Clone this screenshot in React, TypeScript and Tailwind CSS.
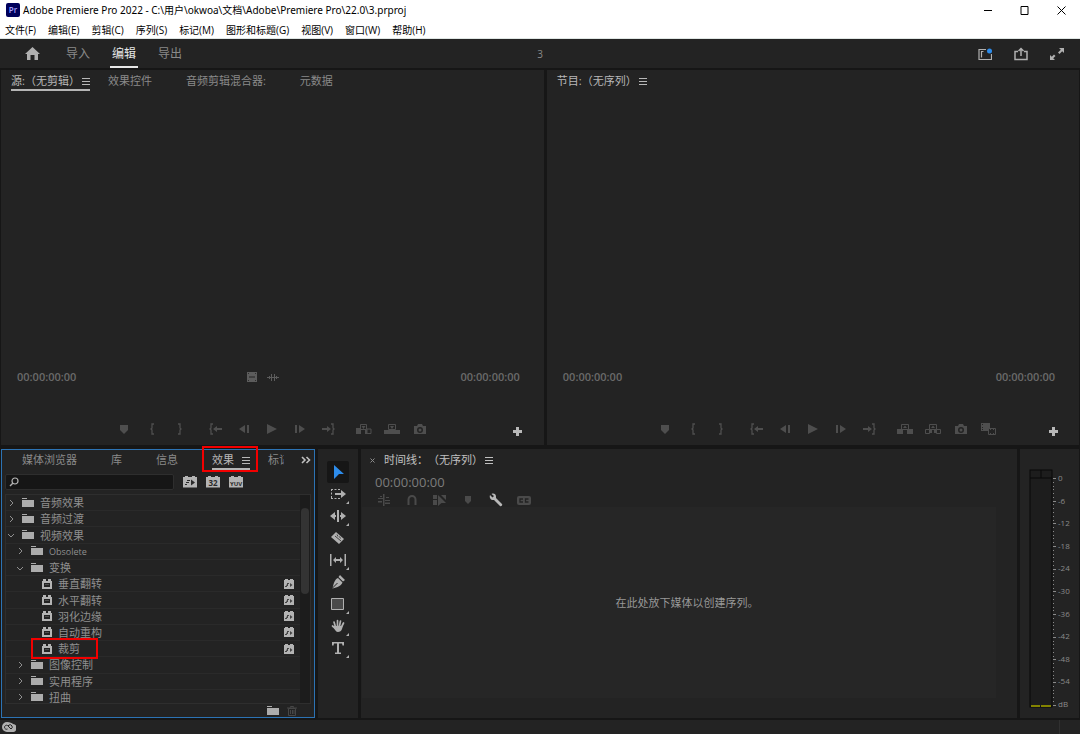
import React from 'react';
import clsx from 'clsx';

const MENUS = ['文件(F)', '编辑(E)', '剪辑(C)', '序列(S)', '标记(M)', '图形和标题(G)', '视图(V)', '窗口(W)', '帮助(H)'];

const TREE = [
  { name: '音频效果', level: 0 },
  { name: '音频过渡', level: 0 },
  { name: '视频效果', level: 0, open: true },
  { name: 'Obsolete', level: 1 },
  { name: '变换', level: 1, open: true },
  { name: '垂直翻转', level: 2 },
  { name: '水平翻转', level: 2 },
  { name: '羽化边缘', level: 2 },
  { name: '自动重构', level: 2 },
  { name: '裁剪', level: 2, marked: true },
  { name: '图像控制', level: 1 },
  { name: '实用程序', level: 1 },
  { name: '扭曲', level: 1 },
];

const METER_LABELS = ['0', '-6', '-12', '-18', '-24', '-30', '-36', '-42', '-48', '-54', 'dB'];

type IconProps = { w?: number; h?: number; className?: string; children: React.ReactNode };

const Icon = ({ w = 16, h = 16, className, children }: IconProps) => (
  <svg width={w} height={h} viewBox={`0 0 ${w} ${h}`} fill="currentColor" className={clsx('shrink-0', className)} aria-hidden="true">
    {children}
  </svg>
);

const MenuLines = () => (
  <Icon w={8} h={8}>
    <path d="M0 1h8v1H0zM0 4h8v1H0zM0 7h8v1H0z" />
  </Icon>
);

const Folder = () => (
  <Icon w={12} h={10}>
    <path d="M0 0h5v1H0zM0 2h12v7H0z" />
  </Icon>
);

const Brick = () => (
  <Icon w={10} h={10}>
    <path fillRule="evenodd" d="M1 0h3v2h2V0h3v2h1v8H0V2h1zM2 4v4h6V4z" />
    <path d="M3 5h4v1H3z" opacity=".3" />
  </Icon>
);

const BadgeSmall = () => (
  <Icon w={10} h={10} className="text-[#b4b4b4]">
    <path d="M1 0h3v1h2V0h3v1h1v9H0V1h1z" />
    <path d="M3 4h2v1H3zM3 5h1v2H2zM1 7h2v1H1zM6 4l2.500 2L6 8z" fill="#444" />
  </Icon>
);

const Badge = ({ text }: { text?: string }) => (
  <Icon w={14} h={12}>
    <path d="M2 0h3v1h4V0h3v1h2v10.500H0V1h2z" />
    {text ? (
      <text x="7" y="9.500" textAnchor="middle" fontSize={text.length > 2 ? 6 : 8} fontWeight="700" fill="#2a2a2a">
        {text}
      </text>
    ) : (
      <path d="M4 4h3v1H4zM3 6h3v1H3zM2 8h2v1H2zM8 3.500 12 6.500 8 9.500z" fill="#2a2a2a" />
    )}
  </Icon>
);

type TabProps = { label: string; active?: boolean; boxed?: boolean; single?: boolean };

const Tab = ({ label, active, boxed, single }: TabProps) => (
  <button
    className={clsx(
      'relative flex h-5 shrink-0 items-center whitespace-nowrap border-b-2 pt-0.5',
      label.endsWith('）') ? 'gap-0.5' : 'gap-2',
      active ? 'border-[#b5b5b5]' : 'border-transparent',
      active || single ? 'text-[#b8b8b8]' : 'text-[#8a8a8a]'
    )}
  >
    {label}
    <span className={active || single ? '' : 'invisible'}>
      <MenuLines />
    </span>
    {boxed && <span className="absolute -top-1 -right-2 -bottom-1 -left-2.5 border-2 border-[#f20000]" />}
  </button>
);

/* Transport glyphs */
const GLYPHS: Record<string, React.ReactNode> = {
  marker: <path d="M4 4h8v5l-4 4-4-4z" />,
  in: <path d="M10 3H8v4L7 8l1 1v4h2" fill="none" stroke="currentColor" strokeWidth="1.300" />,
  out: <path d="M6 3h2v4l1 1-1 1v4H6" fill="none" stroke="currentColor" strokeWidth="1.300" />,
  goIn: (
    <>
      <path d="M5 3H3v4L2 8l1 1v4h2" fill="none" stroke="currentColor" strokeWidth="1.300" />
      <path d="M5 8l4-3v2h5v2H9v2z" />
    </>
  ),
  stepBack: <path d="M3 8l6-4v8zM11 4h2v8h-2z" />,
  play: <path d="M3 3l10 5-10 5z" />,
  stepForward: <path d="M13 8L7 4v8zM3 4h2v8H3z" />,
  goOut: (
    <>
      <path d="M11 3h2v4l1 1-1 1v4h-2" fill="none" stroke="currentColor" strokeWidth="1.300" />
      <path d="M11 8L7 5v2H2v2h5v2z" />
    </>
  ),
  insert: (
    <>
      <path d="M0 7h5v6H0z" />
      <path d="M4.500 3.500h6v5h-6zM11 8h4v4.500h-4z" fill="none" stroke="currentColor" />
      <path d="M5.500 5h4l-2 3zM9 9h2v4H9z" />
    </>
  ),
  overwrite: (
    <>
      <path d="M0 9h16v4H0z" />
      <path d="M4.500 3.500h7v5h-7z" fill="none" stroke="currentColor" />
      <path d="M6 5h4L8 8z" />
    </>
  ),
  lift: (
    <>
      <path d="M0 8h6v5H0zM10 8h6v5h-6z" />
      <path d="M4.500 3.500h7v5h-7z" fill="none" stroke="currentColor" />
      <path d="M8 4.500L10 7H6z" />
    </>
  ),
  extract: (
    <>
      <path d="M.5 8.500h4v4h-4zM11.500 8.500h4v4h-4zM4.500 3.500h7v5h-7z" fill="none" stroke="currentColor" />
      <path d="M8 4.500L10 7H6zM5 9h2v3H5zM9 9h2v3H9z" />
    </>
  ),
  camera: (
    <path fillRule="evenodd" d="M2 5h3l1-2h4l1 2h3v8H2zM8 6a3 3 0 1 0 0 6 3 3 0 0 0 0-6zM8 7.500a1.500 1.500 0 1 1 0 3 1.500 1.500 0 0 1 0-3z" />
  ),
  compare: (
    <>
      <path d="M0 2h9v8H0z" />
      <path d="M7.500 7.500h7v6h-7z" fill="#232323" stroke="currentColor" />
      <path d="M1 3h1v1H1zM1 6h1v1H1zM1 8h1v1H1z" fill="#232323" />
      <path d="M9 8h1v1H9zM9 12h1v1H9zM12 8h1v1h-1zM12 12h1v1h-1z" />
    </>
  ),
};

const GlyphButton = ({ name, label }: { name: string; label: string }) => (
  <button aria-label={label} className="flex h-8 w-7 items-center justify-center text-[#4e4e4e]">
    <Icon>{GLYPHS[name]}</Icon>
  </button>
);

const Monitor = ({ tabs, source }: { tabs: string[]; source?: boolean }) => (
  <section className="flex min-w-0 flex-col bg-[#232323]">
    <div className="flex gap-[18px] overflow-hidden pt-px pl-[10px]">
      {tabs.map((tab, i) => (
        <Tab key={tab} label={tab} active={source && i === 0} single={!source} />
      ))}
    </div>
    <div className="flex-1" />
    <div className="grid h-5 grid-cols-[1fr_auto_1fr] items-center pr-6 pl-4 text-[11px] font-semibold text-[#6a6a6a]">
      <span>00:00:00:00</span>
      <span className="flex items-center gap-[9px] pr-3 text-[#5c5c5c]">
        {source && (
          <>
            <Icon w={12} h={12}>
              <path fillRule="evenodd" d="M1 1h10v10H1zM3 5.500h6v1H3z" />
              <path d="M2 2h1v1H2zM2 9h1v1H2zM9 2h1v1H9zM9 9h1v1H9z" fill="#2e2e2e" />
            </Icon>
            <Icon w={12} h={12}>
              <path d="M0 6h12v1H0zM2 5h1v3H2zM4 3h1v7H4zM7 3h1v7H7zM9 5h1v3H9z" />
            </Icon>
          </>
        )}
      </span>
      <span className="text-right">00:00:00:00</span>
    </div>
    <div className="mt-[26px] grid h-8 grid-cols-[1fr_auto_1fr] px-4">
      <div className="flex justify-end gap-2">
        <div className="flex">
          <GlyphButton name="marker" label="添加标记" />
          <GlyphButton name="in" label="标记入点" />
          <GlyphButton name="out" label="标记出点" />
        </div>
        <div className="flex">
          <GlyphButton name="goIn" label="转到入点" />
          <GlyphButton name="stepBack" label="后退一帧" />
        </div>
      </div>
      <GlyphButton name="play" label="播放" />
      <div className="flex gap-2">
        <div className="flex">
          <GlyphButton name="stepForward" label="前进一帧" />
          <GlyphButton name="goOut" label="转到出点" />
        </div>
        <div className="flex">
          <GlyphButton name={source ? 'insert' : 'lift'} label={source ? '插入' : '提升'} />
          <GlyphButton name={source ? 'overwrite' : 'extract'} label={source ? '覆盖' : '提取'} />
          <GlyphButton name="camera" label="导出帧" />
          {!source && <GlyphButton name="compare" label="比较视图" />}
        </div>
        <button aria-label="按钮编辑器" className="ml-auto flex h-7 w-5 items-center justify-center self-end text-[#b8b8b8]">
          <Icon w={9} h={9}>
            <path d="M3 0h3v3h3v3H6v3H3V6H0V3h3z" />
          </Icon>
        </button>
      </div>
    </div>
  </section>
);

const EffectsPanel = () => (
  <section className="flex flex-col border border-[#2c73b4] bg-[#232323] px-[3px]">
    <div className="flex h-[22px] items-start pl-[17px]">
      <div className="flex w-[262px] gap-[18px] overflow-x-clip">
        <Tab label="媒体浏览器" />
        <Tab label="库" />
        <Tab label="信息" />
        <Tab label="效果" active boxed />
        <Tab label="标记" />
      </div>
      <button aria-label="更多面板" className="ml-auto flex h-5 items-center text-[#c0c0c0]">
        <Icon w={10} h={8}>
          <path d="M1 1l3 3-3 3M5.500 1l3 3-3 3" fill="none" stroke="currentColor" strokeWidth="1.6" />
        </Icon>
      </button>
    </div>
    <div className="flex h-[22px] items-center gap-[9px] pb-0.5 text-[#b4b4b4]">
      <div className="relative">
        <input type="text" aria-label="搜索效果" className="block h-4 w-[169px] rounded-xs border border-[#2e2e2e] bg-[#161616] pl-5 text-[11px] outline-none" />
        <Icon w={10} h={10} className="absolute top-[3px] left-1">
          <circle cx="6" cy="4" r="3" fill="none" stroke="currentColor" strokeWidth="1.2" />
          <path d="M4 6L1 9" stroke="currentColor" strokeWidth="1.5" />
        </Icon>
      </div>
      <button aria-label="加速效果"><Badge /></button>
      <button aria-label="32 位颜色效果"><Badge text="32" /></button>
      <button aria-label="YUV 效果"><Badge text="YUV" /></button>
    </div>
    <div className="flex h-[210px] overflow-hidden border border-[#2e2e2e]">
      <ul className="flex h-[211px] min-w-0 flex-1 flex-col">
        {TREE.map((node) => (
          <li
            key={node.name}
            className={clsx(
              'relative flex flex-1 items-center gap-[6px] border-b border-[#2a2a2a] pr-[6px] text-[#8f8f8f]',
              node.level === 1 && 'pl-[9px]',
              node.level === 2 && 'pl-9'
            )}
          >
            {node.level < 2 ? (
              <>
                <button aria-label={`展开 ${node.name}`} className="flex w-[10px] justify-center">
                  <Icon w={8} h={8}>
                    <path d={node.open ? 'M1 3l3 3 3-3' : 'M3 1l3 3-3 3'} fill="none" stroke="currentColor" />
                  </Icon>
                </button>
                <span className="text-[#acacac]"><Folder /></span>
              </>
            ) : (
              <span className="text-[#b4b4b4]"><Brick /></span>
            )}
            <span className={clsx('flex-1 leading-none', node.name === 'Obsolete' && 'text-[9px]')}>{node.name}</span>
            {node.level === 2 && <BadgeSmall />}
            {node.marked && <span className="absolute -top-[3px] -bottom-[3px] left-[25px] w-[67px] border-2 border-[#f20000]" />}
          </li>
        ))}
      </ul>
      <div className="w-[10px] bg-[#1c1c1c] px-px pt-[13px]">
        <div className="h-[86px] rounded-full bg-[#333]" />
      </div>
    </div>
    <div className="flex flex-1 items-center justify-end gap-2 pr-[14px]">
      <button aria-label="新建自定义素材箱" className="text-[#acacac]"><Folder /></button>
      <button aria-label="删除自定义项目" className="text-[#474747]">
        <Icon w={10} h={10}>
          <path d="M1.500 2.500h7v7h-7zM0 2h10M3.500 1.500v-1h3v1M3.500 4v4M5.500 4v4M7 4v4" fill="none" stroke="currentColor" />
        </Icon>
      </button>
    </div>
  </section>
);

const TOOLS: { label: string; more?: boolean; art: React.ReactNode }[] = [
  { label: '选择工具', art: <path d="M4 1l10 9H9l-5 5z" fill="#2d8ceb" /> },
  {
    label: '向前选择轨道工具',
    more: true,
    art: (
      <>
        <path d="M1 3.500h9M1 12.500h9M1.500 3v10" fill="none" stroke="currentColor" strokeDasharray="2 1.500" />
        <path d="M5 7h6V4l5 4-5 4V9H5z" />
      </>
    ),
  },
  { label: '波纹编辑工具', more: true, art: <path d="M7 2h2v12H7zM0 8l5-4v3h1v2H5v3zM16 8l-5-4v3h-1v2h1v3z" /> },
  {
    label: '剃刀工具',
    art: (
      <>
        <path d="M6 2l8 7-5 5-8-7z" />
        <path d="M5 6l6 5M7 4.500l1 2M9.500 6.500l1 2" fill="none" stroke="#444" />
      </>
    ),
  },
  { label: '外滑工具', more: true, art: <path d="M0 2h1.500v12H0zM14.500 2H16v12h-1.500zM3 8l3-3v2h4V5l3 3-3 3V9H6v2z" /> },
  {
    label: '钢笔工具',
    art: (
      <>
        <path d="M10 1l5 5-2 1.500L8.500 3zM8 4l4.500 4.500c-1 3-5 5-10 6C3.500 9.500 5 5 8 4z" />
        <path d="M2.500 14l5-5" stroke="#232323" />
      </>
    ),
  },
  { label: '矩形工具', more: true, art: <path d="M1.500 2.500h12v11h-12z" fill="#4a4a4a" stroke="currentColor" /> },
  {
    label: '手形工具',
    more: true,
    art: (
      <>
        <path d="M5.500 9L4 4M7.500 8V2.500M9.500 8l1-5M11.500 9l2-4M6 11L2.500 8" stroke="currentColor" strokeWidth="1.7" strokeLinecap="round" />
        <path d="M4 8h8.500c0 3-1.500 6-4.500 6-2 0-3-2-4-4z" />
      </>
    ),
  },
  { label: '文字工具', more: true, art: <path d="M2 2h12v3.500h-1.500L12 3.500H9V12.500h2V14H5v-1.500h2V3.500H4l-.5 2H2z" /> },
];

const Tools = () => (
  <section className="flex flex-col items-center bg-[#232323] pt-3 text-[#b0b0b0]">
    {TOOLS.map((tool, i) => (
      <button
        key={tool.label}
        aria-label={tool.label}
        className={clsx('relative flex h-[22px] w-[22px] items-center justify-center', i === 0 && 'rounded-xs bg-[#161616]')}
      >
        <Icon w={16} h={16}>{tool.art}</Icon>
        {tool.more && (
          <Icon w={3} h={3} className="absolute right-0 bottom-px">
            <path d="M3 0v3H0z" />
          </Icon>
        )}
      </button>
    ))}
  </section>
);

const TIMELINE_TOOLS: { label: string; on?: boolean; art: React.ReactNode }[] = [
  { label: '嵌套序列', art: <path d="M7 2h1.500v12H7zM2 6h5v1H2zM4 4h2v1H4zM10 5h3v1h-3zM9 8h5v1H9zM2 9h4v1.500H2zM9 10.500h5V12H9z" /> },
  { label: '对齐', art: <path d="M4.500 13V7.500a3.500 3.500 0 0 1 7 0V13" fill="none" stroke="currentColor" strokeWidth="2" /> },
  { label: '链接选择项', art: <path d="M1 3h4v4H1zM1 8h4v5H1zM9 3h5v5zM6 3l8 8h-4.500L6 14z" /> },
  { label: '添加标记', art: <path d="M5 4h6v5l-3 3-3-3z" /> },
  {
    label: '时间轴显示设置',
    on: true,
    art: <path d="M2 3l2.500 2.500L6 4 3.500 2C5.500 1 8 2 8 4.500V6l6 6c1 1-1 3-2 2L6 8C3 8.500 1 6 2 3z" />,
  },
  {
    label: '字幕轨道选项',
    art: (
      <>
        <rect x="1" y="4" width="14" height="9" rx="2" />
        <path d="M7 7H4v3h3M12.500 7h-3v3h3" fill="none" stroke="#232323" strokeWidth="1.300" />
      </>
    ),
  },
];

const Timeline = () => (
  <section className="flex min-w-0 flex-col bg-[#232323] px-px">
    <div className="flex h-[22px] items-center pl-2 text-[#c0c0c0]">
      <button aria-label="关闭时间线" className="pr-[9px] text-[#8a8a8a]">
        <Icon w={5} h={5}>
          <path d="M.5.5l4 4M4.500.5l-4 4" stroke="currentColor" />
        </Icon>
      </button>
      <span className="pr-0.5">时间线：（无序列）</span>
      <MenuLines />
    </div>
    <div className="pl-[13px] text-[13px] leading-[22px] text-[#7c7c7c]">00:00:00:00</div>
    <div className="flex h-[14px] items-center pl-2">
      {TIMELINE_TOOLS.map((tool) => (
        <button key={tool.label} aria-label={tool.label} className={clsx('flex w-7 justify-center', tool.on ? 'text-[#b8b8b8]' : 'text-[#4a4a4a]')}>
          <Icon w={16} h={16}>{tool.art}</Icon>
        </button>
      ))}
    </div>
    <div className="mr-5 mb-5 flex flex-1 items-center justify-center bg-[#262626] pl-4 text-[#989898]">
      在此处放下媒体以创建序列。
    </div>
  </section>
);

const Meters = () => (
  <section className="flex gap-[2px] bg-[#232323] pt-5 pl-[9px]">
    <Icon w={27} h={240}>
      <rect x="1" y="1" width="22" height="237" fill="#1d1d1d" stroke="#080808" />
      <path d="M1 9h22M12 1v8" fill="none" stroke="#080808" />
      <path d="M2 236h9v2H2zM12 236h10v2H12z" fill="#838300" />
      {Array.from({ length: 61 }, (_, i) => (
        <rect key={i} x="24" y={Math.round(9 + i * 3.78)} width={i % 6 === 0 ? 3 : 1} height="1" fill="#8a8a8a" />
      ))}
    </Icon>
    <div className="flex h-[240px] flex-col justify-between pt-1 text-[8px] leading-[10px] text-[#8a8a8a]">
      {METER_LABELS.map((label) => (
        <span key={label}>{label}</span>
      ))}
    </div>
  </section>
);

const TitleBar = () => (
  <div className="flex h-5 items-center bg-white pl-[6px] text-black">
    <svg width="14" height="14" viewBox="0 0 14 14" className="shrink-0" aria-hidden="true">
      <rect width="14" height="14" rx="2" fill="#00005b" />
      <text x="7" y="10" textAnchor="middle" fontSize="8" fontWeight="600" fill="#a9a5ff">Pr</text>
    </svg>
    <h1 className="truncate pl-[3px] font-['Noto_Sans','Noto_Sans_CJK_SC',sans-serif] text-[10px]">
      Adobe Premiere Pro 2022 - C:\用户\okwoa\文档\Adobe\Premiere Pro\22.0\3.prproj
    </h1>
    <div className="ml-auto flex">
      <button aria-label="最小化" className="flex w-[37px] justify-center">
        <Icon w={9} h={9}><path d="M1 4h8v1H1z" /></Icon>
      </button>
      <button aria-label="最大化" className="flex w-[37px] justify-center">
        <Icon w={9} h={9}><path d="M1 .5h7v8H1z" fill="none" stroke="currentColor" /></Icon>
      </button>
      <button aria-label="关闭" className="flex w-[37px] justify-center">
        <Icon w={9} h={9}><path d="M.5.5l8 8M8.500.5l-8 8" stroke="currentColor" /></Icon>
      </button>
    </div>
  </div>
);

const WorkspaceBar = () => (
  <header className="grid h-[29px] grid-cols-[1fr_auto_1fr] items-center bg-[#232323] text-[#8a8a8a]">
    <nav className="flex h-full items-center pl-[25px]">
      <button aria-label="主页" className="pr-6 text-[#b0b0b0]">
        <Icon w={15} h={13}>
          <path d="M7.500 0L15 7h-2v6H9.500V8h-4v5H2V7H0z" />
        </Icon>
      </button>
      <div className="flex h-full gap-[18px] text-xs">
        <button className="border-b-2 border-transparent px-0.5 pt-0.5">导入</button>
        <button className="border-b-2 border-[#e6e6e6] px-0.5 pt-0.5 text-[#e6e6e6]">编辑</button>
        <button className="border-b-2 border-transparent px-0.5 pt-0.5">导出</button>
      </div>
    </nav>
    <span className="text-[10px]">3</span>
    <div className="flex justify-end gap-[22px] pr-4 text-[#b0b0b0]">
      <button aria-label="工作区">
        <Icon w={14} h={14}>
          <path d="M8 2.500H1v10h12.500V7M3.500 4.500v6M5.500 4.500H3" fill="none" stroke="currentColor" strokeWidth="1.200" />
          <circle cx="11.500" cy="4" r="2.500" fill="#2d8ceb" />
        </Icon>
      </button>
      <button aria-label="快速导出">
        <Icon w={14} h={14}>
          <path d="M4 4.500H1v8h12v-8h-3M7 9V2M4.500 4L7 1.500 9.500 4" fill="none" stroke="currentColor" strokeWidth="1.5" />
        </Icon>
      </button>
      <button aria-label="全屏">
        <Icon w={14} h={14}>
          <path d="M9 1h5v5l-1.800-1.800L9.500 7 8 5.500l2.800-2.700zM5 13H0V8l1.800 1.800L4 7.500 5.500 9l-2.300 2.200z" />
        </Icon>
      </button>
    </div>
  </header>
);

export default function App() {
  return (
    <div className="flex min-h-screen flex-col bg-[#161616] font-['Open_Sans','Noto_Sans_CJK_SC',sans-serif] text-[11px] leading-4 [text-spacing-trim:space-all]">
      <TitleBar />
      <div className="flex h-[19px] items-center gap-3 border-b border-[#dfe6e4] bg-white pt-0.5 pl-[5px] text-[10px] text-black">
        {MENUS.map((menu) => (
          <button key={menu} className="whitespace-nowrap">{menu}</button>
        ))}
      </div>
      <WorkspaceBar />

      <main className="flex flex-1 flex-col gap-1 px-px py-0.5">
        <div className="grid flex-1 grid-cols-[51fr_50fr] gap-[3px]">
          <Monitor source tabs={['源:（无剪辑）', '效果控件', '音频剪辑混合器:', '元数据']} />
          <Monitor tabs={['节目:（无序列）']} />
        </div>
        <div className="grid h-[269px] grid-cols-[314px_40px_1fr_59px] gap-[3px]">
          <EffectsPanel />
          <Tools />
          <Timeline />
          <Meters />
        </div>
      </main>

      <footer className="flex h-[14px] items-center justify-between bg-[#232323] pr-5 pl-[2px] text-[#b0b0b0]">
        <Icon w={14} h={10}>
          <path d="M5 0a5 5 0 0 0 0 10h5a4 4 0 0 0 1-8C10 1 8 0 5 0z" />
          <path d="M9 7L5.500 3.500a2 2 0 1 0 0 3.500M6 4l1-1a2.200 2.200 0 1 1 2 4" fill="none" stroke="#232323" />
        </Icon>
        <span className="h-full w-px bg-[#303030]" />
      </footer>
    </div>
  );
}
